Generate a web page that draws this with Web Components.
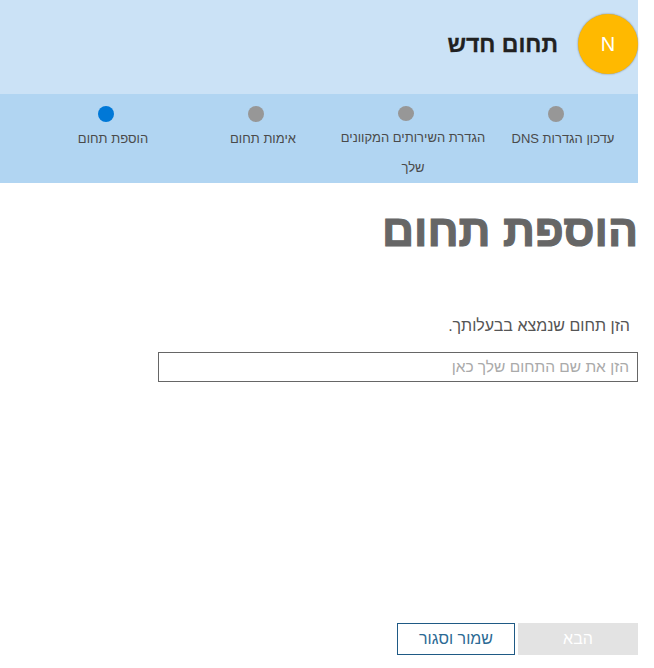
<!DOCTYPE html>
<html lang="he" dir="rtl">
<head>
<meta charset="utf-8">
<title>תחום חדש</title>
<style>
    html, body { margin: 0; padding: 0; background: #fff; }
    body { width: 654px; height: 668px; overflow: hidden; font-family: "Liberation Sans", sans-serif; }
</style>
</head>
<body>
<wizard-page>
    <wizard-header slot="header" initial="N">תחום חדש</wizard-header>
    <wizard-steps slot="steps">
        <wizard-step>עדכון הגדרות DNS</wizard-step>
        <wizard-step>הגדרת השירותים המקוונים שלך</wizard-step>
        <wizard-step>אימות תחום</wizard-step>
        <wizard-step active>הוספת תחום</wizard-step>
    </wizard-steps>
    <domain-form slot="content"></domain-form>
    <wizard-button slot="footer" disabled>הבא</wizard-button>
    <wizard-button slot="footer" outline>שמור וסגור</wizard-button>
</wizard-page>

<script>
class WizardPage extends HTMLElement {
    constructor() {
        super();
        this.attachShadow({ mode: 'open' });
        this.shadowRoot.innerHTML = `
            <style>
                :host { display: flex; flex-direction: column; width: 638px; height: 668px; margin-right: 16px; margin-left: 0; }
                main { flex: 1; }
                footer { display: flex; gap: 3px; height: 32px; margin-bottom: 13px; }
            </style>
            <slot name="header"></slot>
            <slot name="steps"></slot>
            <main><slot name="content"></slot></main>
            <footer><slot name="footer"></slot></footer>
        `;
    }
}

class WizardHeader extends HTMLElement {
    constructor() {
        super();
        this.attachShadow({ mode: 'open' });
        this.shadowRoot.innerHTML = `
            <style>
                :host { display: flex; align-items: center; gap: 20px; height: 94px; box-sizing: border-box; padding-bottom: 6px; background: #cbe2f6; }
                .avatar {
                    width: 60px; height: 60px; border-radius: 50%;
                    background: #ffb900; color: #fff;
                    box-shadow: 0 0 2px rgba(0,0,0,.45);
                    display: flex; align-items: center; justify-content: center;
                    font: 20px "Liberation Sans", sans-serif;
                }
                h1 { margin: 0; font-size: 23px; font-weight: 700; -webkit-text-stroke: .3px #212121; color: #212121; }
            </style>
            <div class="avatar"></div>
            <h1><slot></slot></h1>
        `;
        this.shadowRoot.querySelector('.avatar').textContent = this.getAttribute('initial');
    }
}

class WizardSteps extends HTMLElement {
    constructor() {
        super();
        this.attachShadow({ mode: 'open' });
        this.shadowRoot.innerHTML = `
            <style>
                :host { display: flex; height: 89px; padding: 0 7px 0 0; background: #b1d5f2; }
            </style>
            <slot></slot>
        `;
    }
}

class WizardStep extends HTMLElement {
    constructor() {
        super();
        this.attachShadow({ mode: 'open' });
        this.shadowRoot.innerHTML = `
            <style>
                :host { display: flex; flex-direction: column; align-items: center; width: 150px; padding-top: 12px; color: #4a4a4a; font-size: 13px; line-height: 30px; text-align: center; }
                .dot { width: 16px; height: 16px; border-radius: 50%; background: #979797; margin-bottom: 2px; }
                :host([active]) .dot { background: #0078d7; }
                .label { width: 150px; margin-left: 7px; margin-right: -7px; }
            </style>
            <div class="dot"></div>
            <div class="label"><slot></slot></div>
        `;
    }
}

class DomainForm extends HTMLElement {
    constructor() {
        super();
        this.attachShadow({ mode: 'open' });
        this.shadowRoot.innerHTML = `
            <style>
                :host { display: block; }
                h2 { margin: 0; height: 96px; font-size: 44.5px; line-height: 96px; font-weight: 700; -webkit-text-stroke: 1.2px #666; color: #666; }
                p { margin: 37px 8px 0 0; font-size: 16px; line-height: 20px; color: #555; }
                input {
                    display: block; box-sizing: border-box; width: 480px; height: 30px;
                    margin: 16px 0 0; padding: 0 8px;
                    border: 1px solid #666; border-radius: 0; outline: none;
                    background: #fff; font: inherit; font-size: 15.5px;
                }
                input::placeholder { color: #aaa; opacity: 1; }
            </style>
            <h2>הוספת תחום</h2>
            <p>הזן תחום שנמצא בבעלותך.</p>
            <input type="text" placeholder="הזן את שם התחום שלך כאן">
        `;
    }
}

class WizardButton extends HTMLElement {
    constructor() {
        super();
        this.attachShadow({ mode: 'open' });
        this.shadowRoot.innerHTML = `
            <style>
                :host { display: block; }
                button {
                    box-sizing: border-box; width: 120px; height: 32px; margin: 0; padding: 0;
                    border: none; font: inherit; font-size: 16px; cursor: pointer;
                }
                :host([disabled]) button { background: #e3e3e3; color: #fff; }
                :host([outline]) button { width: 118px; background: #fff; color: #2c6a94; border: 1px solid #1f5a85; }
            </style>
            <button type="button"><slot></slot></button>
        `;
    }
}

customElements.define('wizard-page', WizardPage);
customElements.define('wizard-header', WizardHeader);
customElements.define('wizard-steps', WizardSteps);
customElements.define('wizard-step', WizardStep);
customElements.define('domain-form', DomainForm);
customElements.define('wizard-button', WizardButton);
</script>
</body>
</html>
